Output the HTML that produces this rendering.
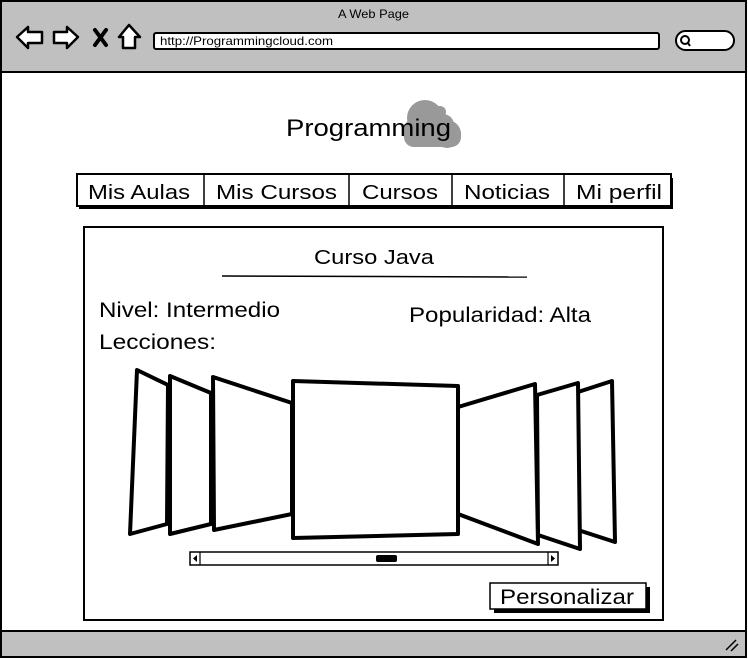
<!DOCTYPE html>
<html><head><meta charset="utf-8"><style>html,body{margin:0;padding:0;background:#fff}svg{display:block}text{font-family:"Liberation Sans",sans-serif;fill:#000}</style></head><body>
<svg width="748" height="659" viewBox="0 0 748 659" xmlns="http://www.w3.org/2000/svg">
<rect x="1" y="1" width="745" height="656" fill="#fff" stroke="#000" stroke-width="2"/>
<rect x="2" y="2" width="743" height="70" fill="#c0c0c0"/>
<line x1="1" y1="72" x2="747" y2="72" stroke="#000" stroke-width="2"/>
<text x="338" y="18" font-size="12" textLength="71" lengthAdjust="spacingAndGlyphs">A Web Page</text>
<path d="M17 37 L28 27 L28 32 L42 32 L42 43 L28 43 L28 48 Z" fill="#fff" stroke="#000" stroke-width="2.5" stroke-linejoin="round"/>
<path d="M78 37 L67 27 L67 32 L54 32 L54 43 L67 43 L67 48 Z" fill="#fff" stroke="#000" stroke-width="2.5" stroke-linejoin="round"/>
<path d="M95 30 L106 45 M106 30 L95 45" stroke="#000" stroke-width="4" stroke-linecap="round"/>
<path d="M129 25 L119 37 L123 37 L123 48 L135 48 L135 37 L140 37 Z" fill="#fff" stroke="#000" stroke-width="2.5" stroke-linejoin="round"/>
<rect x="154" y="33" width="505" height="16" rx="2" fill="#fff" stroke="#000" stroke-width="2"/>
<text x="160" y="45" font-size="12" textLength="173" lengthAdjust="spacingAndGlyphs">http://Programmingcloud.com</text>
<rect x="676" y="31" width="58" height="19" rx="9.5" fill="#fff" stroke="#000" stroke-width="2"/>
<circle cx="685" cy="40" r="4" fill="none" stroke="#000" stroke-width="2"/>
<line x1="688" y1="43" x2="690" y2="46" stroke="#000" stroke-width="2"/>
<g fill="#999">
<circle cx="425" cy="118" r="18"/><circle cx="443" cy="125" r="11"/><circle cx="418" cy="132" r="15"/><circle cx="447" cy="134" r="14"/><circle cx="440" cy="112" r="6"/>
<rect x="404" y="125" width="57" height="22" rx="10"/>
</g>
<text x="286" y="136" font-size="24" textLength="165" lengthAdjust="spacingAndGlyphs">Programming</text>
<rect x="79" y="178" width="594" height="31" fill="#000"/>
<rect x="77" y="174" width="594" height="32" fill="#fff" stroke="#000" stroke-width="2"/>
<g stroke="#000" stroke-width="1.5"><line x1="204" y1="175" x2="204" y2="206"/><line x1="349" y1="175" x2="349" y2="206"/><line x1="452" y1="175" x2="452" y2="206"/><line x1="564" y1="175" x2="564" y2="206"/></g>
<g font-size="20">
<text x="88" y="199" textLength="102" lengthAdjust="spacingAndGlyphs">Mis Aulas</text>
<text x="216" y="199" textLength="121" lengthAdjust="spacingAndGlyphs">Mis Cursos</text>
<text x="362" y="199" textLength="76" lengthAdjust="spacingAndGlyphs">Cursos</text>
<text x="464" y="199" textLength="86" lengthAdjust="spacingAndGlyphs">Noticias</text>
<text x="576" y="199" textLength="86" lengthAdjust="spacingAndGlyphs">Mi perfil</text>
</g>
<rect x="84" y="227" width="579" height="393" fill="#fff" stroke="#000" stroke-width="2"/>
<text x="314" y="264" font-size="20" textLength="120" lengthAdjust="spacingAndGlyphs">Curso Java</text>
<line x1="222" y1="276" x2="527" y2="277" stroke="#000" stroke-width="1.5"/>
<text x="99" y="317" font-size="21" textLength="181" lengthAdjust="spacingAndGlyphs">Nivel: Intermedio</text>
<text x="99" y="349" font-size="21" textLength="117" lengthAdjust="spacingAndGlyphs">Lecciones:</text>
<text x="409" y="322" font-size="21" textLength="182" lengthAdjust="spacingAndGlyphs">Popularidad: Alta</text>
<g fill="#fff" stroke="#000" stroke-width="4" stroke-linejoin="round">
<path d="M137 370 L168 385 L167 524 L130 534 Z"/>
<path d="M170 376 L211 393 L211 524 L170 534 Z"/>
<path d="M213 377 L292 403 L292 514 L214 530 Z"/>
<path d="M578 392 L612 381 L615 542 L578 530 Z"/>
<path d="M537 395 L578 383 L580 549 L538 535 Z"/>
<path d="M458 407 L535 384 L538 544 L458 514 Z"/>
<path d="M293 381 L458 386 L458 534 L293 538 Z"/>
</g>
<rect x="190" y="552" width="368" height="13" fill="#fff" stroke="#000" stroke-width="1.5"/>
<line x1="200" y1="552" x2="200" y2="565" stroke="#000" stroke-width="1.2"/>
<line x1="548" y1="552" x2="548" y2="565" stroke="#000" stroke-width="1.2"/>
<path d="M197 555 L193 558.5 L197 562 Z"/><path d="M551 555 L555 558.5 L551 562 Z"/>
<rect x="376" y="555" width="21" height="7" rx="2"/>
<rect x="494" y="587" width="156" height="26" fill="#000"/>
<rect x="490" y="583" width="156" height="26" fill="#fff" stroke="#000" stroke-width="1.5"/>
<text x="500" y="604" font-size="21" textLength="134" lengthAdjust="spacingAndGlyphs">Personalizar</text>
<line x1="1" y1="631" x2="747" y2="631" stroke="#000" stroke-width="2"/>
<rect x="2" y="632" width="743" height="24" fill="#c0c0c0"/>
<line x1="726" y1="650" x2="736" y2="640" stroke="#000" stroke-width="1.5"/>
<line x1="731" y1="651" x2="738" y2="644" stroke="#000" stroke-width="1.5"/>
</svg>
</body></html>
